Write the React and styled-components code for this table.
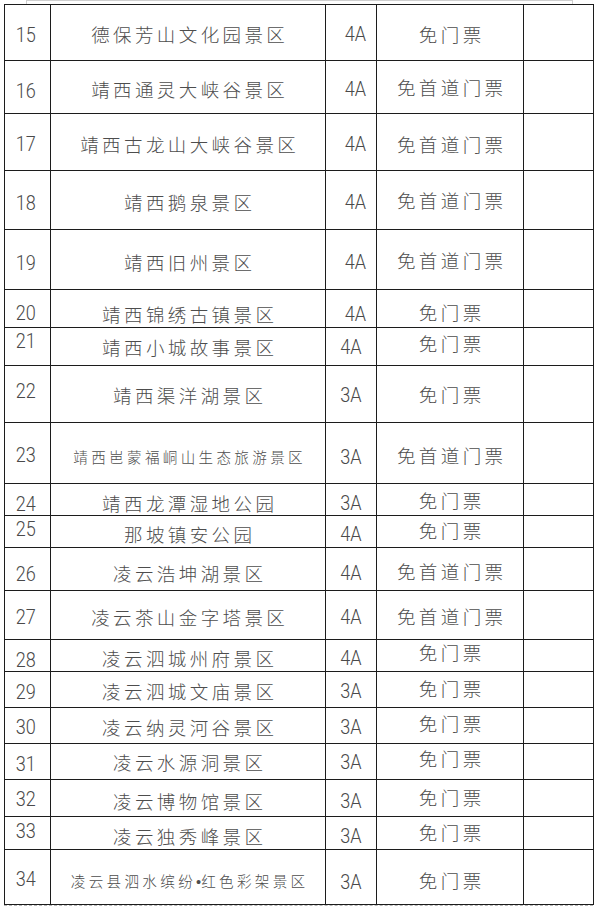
import React from "react";
import styled, { createGlobalStyle } from "styled-components";

const Global = createGlobalStyle`
  html, body { margin: 0; padding: 0; background: #fff; }
  body { width: 600px; height: 913px; overflow: hidden; }
`;

const Page = styled.div`
  width: 600px;
  height: 913px;
  background: #fff;
  display: flex;
  flex-direction: column;
`;

const TopEdge = styled.div`
  margin-left: 26px;
  width: 545px;
  height: 3px;
  border: 1px solid #cfcfcf;
  border-bottom: none;
  flex: none;
`;

const Table = styled.table`
  border-collapse: collapse;
  margin-left: 4px;
  width: 589px;
  table-layout: fixed;
  flex: none;
`;

const Row = styled.tr`
  height: ${(p) => p.$h}px;
`;

const Cell = styled.td`
  border: 1.6px solid #1c1c1c;
  padding: 0;
  vertical-align: middle;
  text-align: center;
  white-space: nowrap;
  overflow: hidden;
  line-height: 1;
`;

const Num = styled.div`
  font-family: Roboto, "Liberation Sans", sans-serif;
  font-weight: 300;
  font-size: 21px;
  line-height: 1;
  color: #4a4a4a;
  position: relative;
  top: ${(p) => p.$dy || 0}px;
  padding-right: 4px;
  transform: scaleX(0.86);
`;

const Level = styled(Num)`
  padding-right: 0;
  padding-left: ${(p) => (p.$shift ? 10 : 0)}px;
`;

const Han = styled.div`
  font-family: "Noto Sans CJK SC Light", "Noto Sans CJK SC DemiLight", "Noto Sans CJK SC", "Noto Sans", sans-serif;
  font-weight: 300;
  font-size: ${(p) => (p.$small ? 14.6 : 18.5)}px;
  letter-spacing: ${(p) => (p.$small ? 3.3 : 3.4)}px;
  padding-left: ${(p) => (p.$small ? 3.3 : 3.4)}px;
  line-height: 1;
  color: #4d4d4d;
  position: relative;
  top: ${(p) => p.$dy || 0}px;
`;

const Dot = styled.span`
  font-family: "Liberation Sans", sans-serif;
  letter-spacing: 0;
`;

const BottomEdge = styled.div`
  margin-left: 4px;
  width: 589px;
  border-top: 1px dashed #b5b5b5;
  flex: none;
`;

// dn: offset of number, dm: offset of name & level, dt: offset of ticket text
const rows = [
  { n: 15, h: 56, name: "德保芳山文化园景区", lv: "4A", t: "免门票", shift: true, dn: 2.5, dm: 2, dt: 2 },
  { n: 16, h: 53, name: "靖西通灵大峡谷景区", lv: "4A", t: "免首道门票", shift: true, dn: 4, dm: 2, dt: 0 },
  { n: 17, h: 57, name: "靖西古龙山大峡谷景区", lv: "4A", t: "免首道门票", shift: true, dn: 2.5, dm: 2.5, dt: 2.5 },
  { n: 18, h: 59, name: "靖西鹅泉景区", lv: "4A", t: "免首道门票", shift: true, dn: 3, dm: 2.5, dt: 0.5 },
  { n: 19, h: 60, name: "靖西旧州景区", lv: "4A", t: "免首道门票", shift: true, dn: 3.5, dm: 3, dt: 1 },
  { n: 20, h: 38, name: "靖西锦绣古镇景区", lv: "4A", t: "免门票", shift: true, dn: 5, dm: 5.5, dt: 3.5 },
  { n: 21, h: 38, name: "靖西小城故事景区", lv: "4A", t: "免门票", dn: -5, dm: 0.5, dt: -3.5 },
  { n: 22, h: 57, name: "靖西渠洋湖景区", lv: "3A", t: "免门票", dn: -3, dm: 1.5, dt: 0.5 },
  { n: 23, h: 61, name: "靖西岜蒙福峒山生态旅游景区", lv: "3A", t: "免首道门票", small: true, dn: 2.5, dm: 4, dt: 2.5 },
  { n: 24, h: 32, name: "靖西龙潭湿地公园", lv: "3A", t: "免门票", dn: 4.5, dm: 4, dt: 0.5 },
  { n: 25, h: 32, name: "那坡镇安公园", lv: "4A", t: "免门票", dn: -2.5, dm: 3, dt: -1.5 },
  { n: 26, h: 43, name: "凌云浩坤湖景区", lv: "4A", t: "免首道门票", dn: 5, dm: 4, dt: 2 },
  { n: 27, h: 49, name: "凌云茶山金字塔景区", lv: "4A", t: "免首道门票", dn: 2, dm: 2.5, dt: 1 },
  { n: 28, h: 32, name: "凌云泗城州府景区", lv: "4A", t: "免门票", dn: 4.5, dm: 2.5, dt: -3.5 },
  { n: 29, h: 36, name: "凌云泗城文庙景区", lv: "3A", t: "免门票", dn: 2.5, dm: 1.5, dt: -1.5 },
  { n: 30, h: 36, name: "凌云纳灵河谷景区", lv: "3A", t: "免门票", dn: 1.5, dm: 1.5, dt: -2.5 },
  { n: 31, h: 36, name: "凌云水源洞景区", lv: "3A", t: "免门票", dn: 2.5, dm: 0.5, dt: -3.5 },
  { n: 32, h: 37, name: "凌云博物馆景区", lv: "3A", t: "免门票", dn: 1.5, dm: 3, dt: -1 },
  { n: 33, h: 33, name: "凌云独秀峰景区", lv: "3A", t: "免门票", dn: -2, dm: 3, dt: -1 },
  { n: 34, h: 55, name: "凌云县泗水缤纷•红色彩架景区", lv: "3A", t: "免门票", small: true, dn: 2.5, dm: 5, dt: 3.5 },
];

function renderName(name) {
  const i = name.indexOf("•");
  if (i < 0) return name;
  return (
    <>
      {name.slice(0, i)}
      <Dot>•</Dot>
      {name.slice(i + 1)}
    </>
  );
}

export default function App() {
  return (
    <Page>
      <Global />
      <TopEdge />
      <Table>
        <colgroup>
          <col style={{ width: 46 }} />
          <col style={{ width: 275 }} />
          <col style={{ width: 51 }} />
          <col style={{ width: 147 }} />
          <col style={{ width: 70 }} />
        </colgroup>
        <tbody>
          {rows.map((r) => (
            <Row key={r.n} $h={r.h}>
              <Cell>
                <Num $dy={r.dn}>{r.n}</Num>
              </Cell>
              <Cell>
                <Han $small={r.small} $dy={r.dm}>{renderName(r.name)}</Han>
              </Cell>
              <Cell>
                <Level $shift={r.shift} $dy={r.dm}>{r.lv}</Level>
              </Cell>
              <Cell>
                <Han $dy={r.dt}>{r.t}</Han>
              </Cell>
              <Cell />
            </Row>
          ))}
        </tbody>
      </Table>
      <BottomEdge />
    </Page>
  );
}
